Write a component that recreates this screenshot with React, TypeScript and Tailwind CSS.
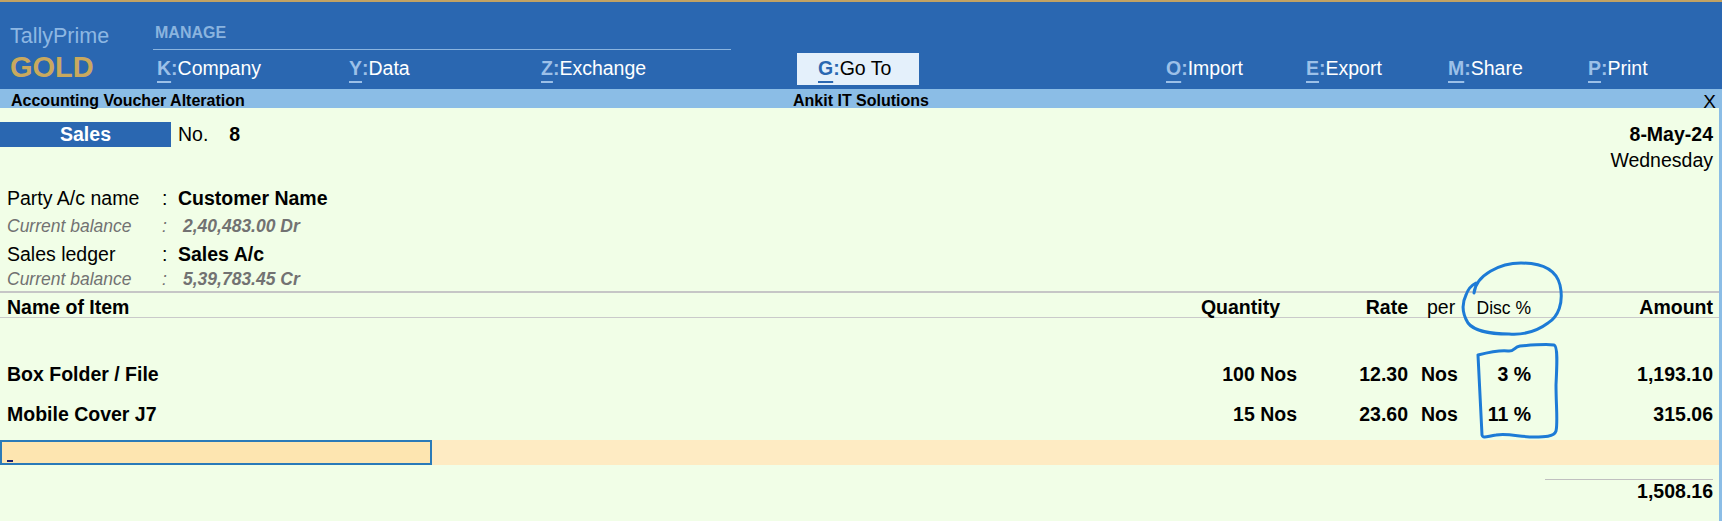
const MENU_LEFT = [
  { k: 'K', label: 'Company', w: 'w-[192px]' },
  { k: 'Y', label: 'Data', w: 'w-[192px]' },
  { k: 'Z', label: 'Exchange', w: 'w-[256px]' },
]

const MENU_RIGHT = [
  { k: 'O', label: 'Import', w: 'w-[140px] ml-[247px]' },
  { k: 'E', label: 'Export', w: 'w-[142px]' },
  { k: 'M', label: 'Share', w: 'w-[140px]' },
  { k: 'P', label: 'Print', w: 'w-[120px]' },
]

const ITEMS = [
  { name: 'Box Folder / File', qty: '100 Nos', rate: '12.30', per: 'Nos', disc: '3 %', amount: '1,193.10' },
  { name: 'Mobile Cover J7', qty: '15 Nos', rate: '23.60', per: 'Nos', disc: '11 %', amount: '315.06' },
]

function MenuItem({ k, label, w }: { k: string; label: string; w: string }) {
  return (
    <div className={`${w} flex items-center text-[19.5px] whitespace-nowrap`}>
      <span className="font-bold text-[#9cc0e8] underline decoration-[#9cc0e8] decoration-[1.5px] underline-offset-[6px]">{k}</span>
      <span className="font-bold text-[#9cc0e8]">:</span>
      <span className="text-white">{label}</span>
    </div>
  )
}

function Row({ label, value }: { label: string; value: string }) {
  return (
    <div className="grid h-full grid-cols-[155px_16px_1fr] items-center pl-[7px]">
      <span>{label}</span>
      <span>:</span>
      <span className="font-bold">{value}</span>
    </div>
  )
}

function Balance({ value }: { value: string }) {
  return (
    <div className="grid h-full grid-cols-[155px_21px_1fr] items-center pl-[7px] text-[17.5px] italic text-[#727272]">
      <span>Current balance</span>
      <span>:</span>
      <span className="font-bold">{value}</span>
    </div>
  )
}

export default function App() {
  return (
    <div className="relative h-[521px] w-[1722px] overflow-hidden bg-[#f1fee7] font-['Liberation_Sans',Arial,sans-serif]">
      {/* Top bar */}
      <header className="flex h-[89px] border-t-2 border-[#c2a263] bg-[#2a67b1]">
        <div className="w-[153px] pl-[10px] pt-[22px]">
          <div className="h-[24px] text-[21.5px] leading-[24px] text-[#8db7e3]">TallyPrime</div>
          <div className="mt-[3px] h-[32px] text-[29px] font-bold leading-[32px] text-[#c9a95e]">GOLD</div>
        </div>
        <div className="flex-1 pt-[22px]">
          <div className="h-[17px] pl-[2px] text-[16px] font-bold leading-[17px] text-[#8ab4df]">MANAGE</div>
          <div className="mt-[8px] h-px w-[578px] bg-[#8ab4df]" />
          <div className="mt-[3px] flex h-[32px] items-center pl-[4px]">
            {MENU_LEFT.map(m => <MenuItem key={m.k} {...m} />)}
            <div className="flex h-full w-[122px] items-center bg-[#e4f0fb] pl-[21px] text-[19.5px]">
              <span className="font-bold text-[#2a67b1] underline decoration-[#2a67b1] decoration-[1.5px] underline-offset-[6px]">G</span>
              <span className="font-bold text-[#2a67b1]">:</span>
              <span className="text-black">Go To</span>
            </div>
            {MENU_RIGHT.map(m => <MenuItem key={m.k} {...m} />)}
          </div>
        </div>
      </header>

      {/* Title bar */}
      <div className="grid h-[19px] grid-cols-[1fr_auto_1fr] items-center bg-[#8bbde6] text-[16px] font-bold text-black">
        <span className="pl-[11px]">Accounting Voucher Alteration</span>
        <span>Ankit IT Solutions</span>
        <span className="pr-[6px] text-right text-[19px] leading-[19px] font-normal">X</span>
      </div>

      {/* Voucher body */}
      <div className="h-[413px] border-r-[3px] border-[#8bbde6] pt-[14px] text-[19.5px] text-black">
        <div className="flex h-[25px] items-center pr-[6px]">
          <div className="flex h-full w-[171px] items-center justify-center bg-[#2a67b1] font-bold text-white">Sales</div>
          <span className="ml-[7px]">No.</span>
          <span className="ml-[21px] font-bold">8</span>
          <span className="ml-auto font-bold">8-May-24</span>
        </div>
        <div className="flex h-[28px] items-center justify-end pr-[6px]">Wednesday</div>
        <div className="h-[9px]" />
        <div className="h-[28px]"><Row label="Party A/c name" value="Customer Name" /></div>
        <div className="h-[28px]"><Balance value="2,40,483.00 Dr" /></div>
        <div className="h-[26px]"><Row label="Sales ledger" value="Sales A/c" /></div>
        <div className="h-[25px]"><Balance value="5,39,783.45 Cr" /></div>
        <div className="h-[2px] bg-[#c6c6c6]" />

        {/* Table header */}
        <div className="grid h-[24px] grid-cols-[1fr_160px_111px_62px_61px_182px] items-center pl-[7px] pr-[6px] font-bold">
          <span>Name of Item</span>
          <span className="pr-[17px] text-right">Quantity</span>
          <span className="text-right">Rate</span>
          <span className="pl-[19px] font-normal">per</span>
          <span className="text-right text-[17.5px] font-normal">Disc %</span>
          <span className="text-right">Amount</span>
        </div>
        <div className="h-px bg-[#cacaca]" />
        <div className="h-[42px]" />

        {ITEMS.map((it, i) => (
          <div key={it.name}>
            {i > 0 && <div className="h-[16px]" />}
            <div className="grid h-[24px] grid-cols-[1fr_160px_111px_62px_61px_182px] items-center pl-[7px] pr-[6px] font-bold">
              <span>{it.name}</span>
              <span className="text-right">{it.qty}</span>
              <span className="text-right">{it.rate}</span>
              <span className="pl-[13px]">{it.per}</span>
              <span className="text-right">{it.disc}</span>
              <span className="text-right">{it.amount}</span>
            </div>
          </div>
        ))}

        <div className="h-[16px]" />
        <div className="flex h-[25px]">
          <div className="relative h-full w-[432px] border-2 border-[#2a7ab8] bg-[#fde5b0]">
            <span className="absolute bottom-[1px] left-[5px] h-[2px] w-[6px] bg-[#1b1f6e]" />
          </div>
          <div className="flex-1 bg-[#feebc3]" />
        </div>
        <div className="h-[14px]" />
        <div className="flex justify-end pr-[6px]">
          <div className="h-px w-[168px] bg-[#c0c0c0]" />
        </div>
        <div className="flex h-[24px] items-center justify-end pr-[6px] font-bold">1,508.16</div>
      </div>

      {/* Hand-drawn annotations */}
      <svg className="absolute left-[1450px] top-[255px] h-[195px] w-[125px]" viewBox="0 0 125 195" fill="none" stroke="#1d7bd6" strokeWidth="3" strokeLinecap="round" strokeLinejoin="round">
        <path d="M24 38 C26 20 50 8 71 8 C90 8 106 14 110 30 C114 48 108 62 98 68 C86 77 72 80 59 79 C42 79 24 76 18 68 C12 58 12 48 16 40 C18 34 22 30 26 28" />
        <path d="M28 100 C40 97 50 95 58 96 C64 97 64 92 70 91 C82 90 96 89 104 90 C108 91 107 110 106 130 C106 150 108 168 106 176 C104 182 94 182 84 182 C70 182 58 178 46 180 C38 181 33 184 32 180 C31 160 29 120 28 100" />
      </svg>
    </div>
  )
}
